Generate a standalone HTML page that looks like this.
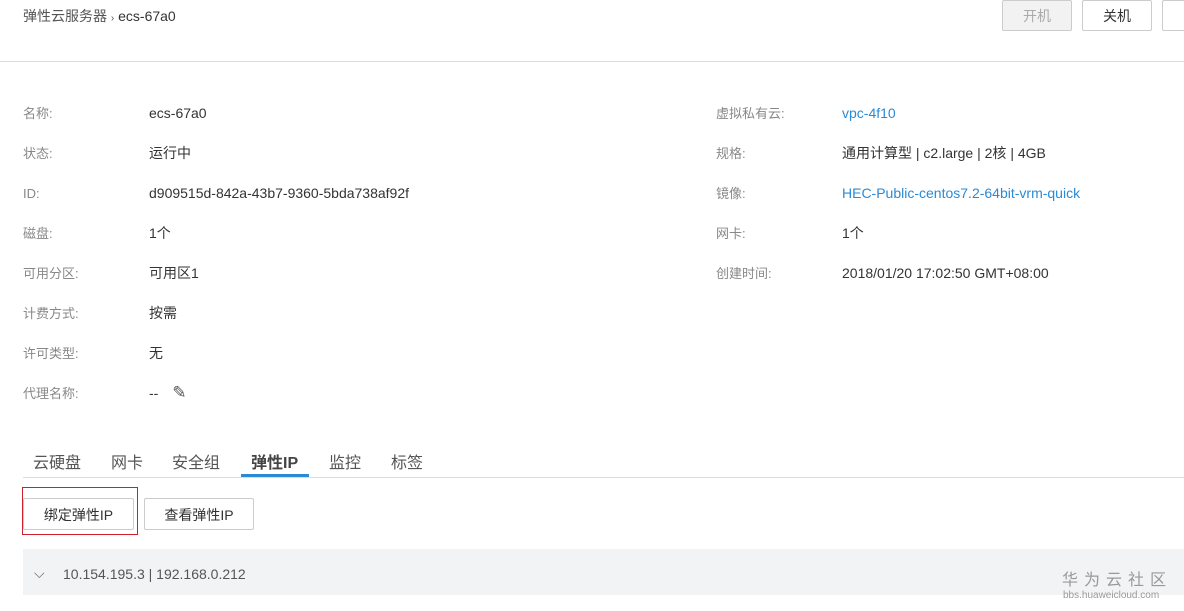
<!DOCTYPE html><html><head><meta charset="utf-8"><style>
body{margin:0;width:1184px;height:611px;overflow:hidden;background:#fff;font-family:"Liberation Sans","Noto Sans CJK SC",sans-serif;font-size:14px;color:#333;position:relative}
.a{position:absolute;white-space:nowrap;line-height:20px}
.l{color:#888;font-size:13px}
.b{color:#2a8ad6}
.t{font-size:16px;color:#555;top:454px}
.btn{position:absolute;border:1px solid #ccc;border-radius:2px;background:#fff;text-align:center;font-size:14px;box-sizing:border-box}
</style></head><body>
<div class="a" style="left:23px;top:6px;color:#555">弹性云服务器 <span style="font-size:10px">›</span> <span style="color:#333">ecs-67a0</span></div>
<div class="btn" style="left:1002px;top:0;width:70px;height:31px;line-height:31px;background:#f2f2f2;color:#aaa">开机</div>
<div class="btn" style="left:1082px;top:0;width:70px;height:31px;line-height:31px">关机</div>
<div class="btn" style="left:1162px;top:0;width:40px;height:31px"></div>
<div class="a" style="left:0;top:61px;width:1184px;height:1px;background:#ddd"></div>
<div class="a l" style="left:23px;top:104px">名称:</div><div class="a" style="left:149px;top:103px">ecs-67a0</div>
<div class="a l" style="left:23px;top:144px">状态:</div><div class="a" style="left:149px;top:143px">运行中</div>
<div class="a l" style="left:23px;top:184px">ID:</div><div class="a" style="left:149px;top:183px">d909515d-842a-43b7-9360-5bda738af92f</div>
<div class="a l" style="left:23px;top:224px">磁盘:</div><div class="a" style="left:149px;top:223px">1个</div>
<div class="a l" style="left:23px;top:264px">可用分区:</div><div class="a" style="left:149px;top:263px">可用区1</div>
<div class="a l" style="left:23px;top:304px">计费方式:</div><div class="a" style="left:149px;top:303px">按需</div>
<div class="a l" style="left:23px;top:344px">许可类型:</div><div class="a" style="left:149px;top:343px">无</div>
<div class="a l" style="left:23px;top:384px">代理名称:</div><div class="a" style="left:149px;top:383px">-- <span style="margin-left:10px;color:#555;font-size:17px">✎</span></div>
<div class="a l" style="left:716px;top:104px">虚拟私有云:</div><div class="a b" style="left:842px;top:103px">vpc-4f10</div>
<div class="a l" style="left:716px;top:144px">规格:</div><div class="a" style="left:842px;top:143px">通用计算型 | c2.large | 2核 | 4GB</div>
<div class="a l" style="left:716px;top:184px">镜像:</div><div class="a b" style="left:842px;top:183px">HEC-Public-centos7.2-64bit-vrm-quick</div>
<div class="a l" style="left:716px;top:224px">网卡:</div><div class="a" style="left:842px;top:223px">1个</div>
<div class="a l" style="left:716px;top:264px">创建时间:</div><div class="a" style="left:842px;top:263px">2018/01/20 17:02:50 GMT+08:00</div>
<div class="a" style="left:23px;top:477px;width:1161px;height:1px;background:#ddd"></div>
<div class="a t" style="left:33px">云硬盘</div>
<div class="a t" style="left:111px">网卡</div>
<div class="a t" style="left:172px">安全组</div>
<div class="a t" style="left:251px;font-weight:bold;color:#444">弹性IP</div>
<div class="a" style="left:241px;top:474px;width:68px;height:3px;background:#2a8ad6;line-height:3px"></div>
<div class="a t" style="left:329px">监控</div>
<div class="a t" style="left:391px">标签</div>
<div class="btn" style="left:23px;top:498px;width:111px;height:32px;line-height:32px">绑定弹性IP</div>
<div class="a" style="left:22px;top:487px;width:114px;height:46px;border:1px solid #d02030"></div>
<div class="btn" style="left:144px;top:498px;width:110px;height:32px;line-height:32px">查看弹性IP</div>
<div class="a" style="left:23px;top:549px;width:1161px;height:46px;background:#f2f3f5"></div>
<div class="a" style="left:34px;top:563px;color:#666">⌵</div>
<div class="a" style="left:63px;top:564px;color:#555">10.154.195.3 | 192.168.0.212</div>
<div class="a" style="left:1062px;top:571px;font-size:16px;color:#999;letter-spacing:6px">华为云社区</div>
<div class="a" style="left:1063px;top:589px;font-size:10px;color:#999;line-height:14px">bbs.huaweicloud.com</div>
</body></html>
